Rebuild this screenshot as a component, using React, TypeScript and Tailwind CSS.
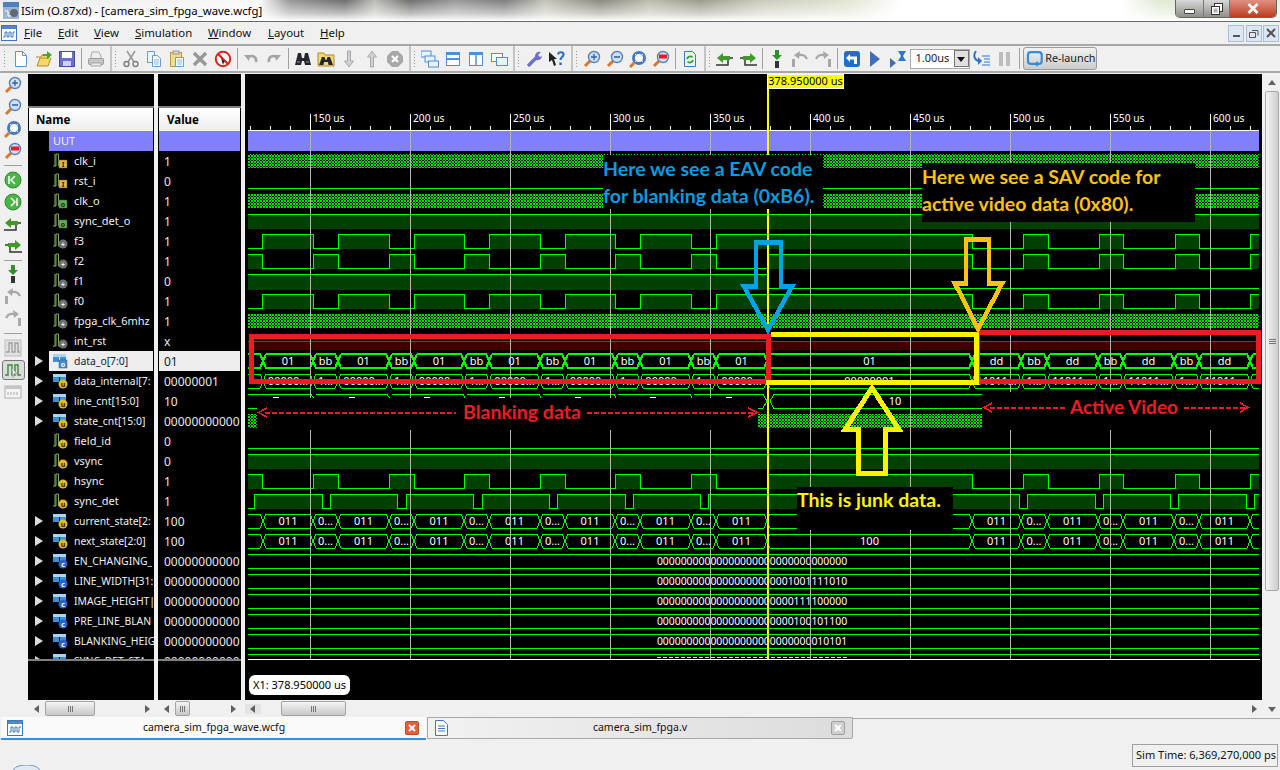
import type { ReactNode } from "react";

const G = "#00ff00";
const rows: [string, string, string][] = [
  ["UUT", "", "group"],
  ["clk_i", "1", "in"],
  ["rst_i", "0", "in"],
  ["clk_o", "1", "out"],
  ["sync_det_o", "1", "out"],
  ["f3", "1", "ball"],
  ["f2", "1", "ball"],
  ["f1", "0", "ball"],
  ["f0", "1", "ball"],
  ["fpga_clk_6mhz", "1", "ball"],
  ["int_rst", "x", "ball"],
  ["data_o[7:0]", "01", "busO"],
  ["data_internal[7:", "00000001", "busU"],
  ["line_cnt[15:0]", "10", "busU"],
  ["state_cnt[15:0]", "00000000000", "busU"],
  ["field_id", "0", "sig"],
  ["vsync", "0", "sig"],
  ["hsync", "1", "sig"],
  ["sync_det", "1", "sig"],
  ["current_state[2:", "100", "busU"],
  ["next_state[2:0]", "100", "busU"],
  ["EN_CHANGING_", "00000000000", "busC"],
  ["LINE_WIDTH[31:", "00000000000", "busC"],
  ["IMAGE_HEIGHT|", "00000000000", "busC"],
  ["PRE_LINE_BLAN", "00000000000", "busC"],
  ["BLANKING_HEIG", "00000000000", "busC"],
  ["SYNC_DET_STA", "00000000000", "busC"],
];

const Svg = ({ children, s = 18 }: { children: ReactNode; s?: number }) => (
  <svg width={s} height={s} viewBox="0 0 18 18" fill="none">
    {children}
  </svg>
);

const Lens = ({ children }: { children?: ReactNode }) => (
  <>
    <path d="M2 16l5-5" stroke="#d9782a" strokeWidth="3" />
    <circle cx="11" cy="7" r="5.5" fill="#cfe0f5" stroke="#5a7fb8" strokeWidth="1.4" />
    {children}
  </>
);

const WaveWin = () => (
  <svg width="16" height="16" viewBox="0 0 16 16" fill="none">
    <rect x=".5" y=".5" width="15" height="15" fill="#fff" stroke="#3f76c0" />
    <rect x="1" y="1" width="14" height="3" fill="#4f86cc" />
    <path d="M2 12h2V7h2v5h2V7h2v5h2V7h2" stroke="#3f76c0" />
  </svg>
);

const Icon = ({ n }: { n: string }) => {
  switch (n) {
    case "doc":
      return <Svg><path d="M3.5 1.5h7l4 4v11h-11z" fill="#fff" stroke="#5b93d3" /><path d="M10.5 1.5v4h4" stroke="#5b93d3" /></Svg>;
    case "open":
      return <Svg><path d="M1 7h5l1-2h7v3H5l-3 8h11l3-8" fill="#f5d76e" stroke="#b98a1c" /><path d="M8 4h4V1l5 4-5 4V6H8z" fill="#46a62e" /></Svg>;
    case "save":
      return <Svg><rect x="1.5" y="1.5" width="15" height="15" fill="#6c70c6" stroke="#484c9a" /><rect x="4" y="2" width="10" height="6" fill="#fff" /><rect x="5" y="11" width="8" height="5" fill="#cfd2ee" /></Svg>;
    case "print":
      return <Svg><path d="M5 2h7l2 4v3H4V6z" fill="#eee" stroke="#aaa" /><rect x="1.5" y="8.5" width="15" height="6" rx="1" fill="#c4c4c4" stroke="#999" /><rect x="4" y="13" width="10" height="3" fill="#e8e8e8" stroke="#aaa" /></Svg>;
    case "cut":
      return <Svg><path d="M5 1l7 11M13 1L6 12" stroke="#9a9a9a" strokeWidth="1.6" /><circle cx="4.5" cy="14" r="2.5" stroke="#808080" strokeWidth="1.4" /><circle cx="13.5" cy="14" r="2.5" stroke="#808080" strokeWidth="1.4" /></Svg>;
    case "copy":
      return <Svg><path d="M2.5 1.5h7v11h-7z" fill="#eef4fb" stroke="#6d9ad0" /><path d="M7.5 5.5h5l3 3v8h-8z" fill="#fff" stroke="#6d9ad0" /><path d="M9 10h5M9 12h5M9 14h5" stroke="#8fb3dd" /></Svg>;
    case "paste":
      return <Svg><rect x="2.5" y="2.5" width="11" height="14" fill="#f3dc8e" stroke="#b99a3a" /><rect x="5" y="1" width="6" height="3" fill="#d9d9d9" stroke="#999" /><path d="M7.5 7.5h8v9h-8z" fill="#fff" stroke="#6d9ad0" /><path d="M9 10h5M9 12h5M9 14h5" stroke="#8fb3dd" /></Svg>;
    case "del":
      return <Svg><path d="M3 3l12 12M15 3L3 15" stroke="#979797" strokeWidth="3.4" /></Svg>;
    case "noentry":
      return <Svg><circle cx="9" cy="9" r="7.2" fill="#fff" stroke="#d8261c" strokeWidth="2" /><path d="M6 4l7 9-3-1-1 3z" fill="#111" /><path d="M4 4l10 10" stroke="#d8261c" strokeWidth="2" /></Svg>;
    case "undo":
      return <Svg><path d="M5 8c3-3 10-3 9 4" stroke="#a4a4a4" strokeWidth="2.6" /><path d="M2 5l6 0-1 6z" fill="#a4a4a4" /></Svg>;
    case "redo":
      return <Svg><path d="M13 8c-3-3-10-3-9 4" stroke="#a4a4a4" strokeWidth="2.6" /><path d="M16 5l-6 0 1 6z" fill="#a4a4a4" /></Svg>;
    case "binoc":
      return <Svg><path d="M4 3h3l1 5h2l1-5h3l3 12h-6l-1-4H8l-1 4H1z" fill="#26262e" /><path d="M3 12h3M12 12h3" stroke="#8f99ad" /></Svg>;
    case "fbinoc":
      return <Svg><path d="M1 3h6l1 2h9v11H1z" fill="#f3d675" stroke="#b98a1c" /><path d="M5 7h2.5l1 3h1l1-3H13l3 8h-4.5L11 12H7l-.5 3H2z" fill="#26262e" /></Svg>;
    case "down":
      return <Svg><path d="M7.5 1h3v10h3L9 17l-4.500-6h3z" fill="#d0d0d0" stroke="#aaa" /></Svg>;
    case "up":
      return <Svg><path d="M7.5 17h3V7h3L9 1 4.500 7h3z" fill="#d0d0d0" stroke="#aaa" /></Svg>;
    case "stop":
      return <Svg><path d="M6 1h6l5 5v6l-5 5H6l-5-5V6z" fill="#a8a8a8" /><path d="M6 6l6 6M12 6l-6 6" stroke="#fff" strokeWidth="2.200" /></Svg>;
    case "cascade":
      return <Svg><rect x="0" y="1" width="10" height="6" fill="#eaf2fb" stroke="#4d90d8" /><rect x="4" y="6" width="10" height="6" fill="#eaf2fb" stroke="#4d90d8" /><rect x="7.500" y="11" width="10" height="6" fill="#eaf2fb" stroke="#4d90d8" /></Svg>;
    case "hsplit":
      return <Svg><rect x="2.500" y="2.500" width="13" height="13" fill="#fff" stroke="#4d90d8" /><rect x="3" y="3" width="12" height="2" fill="#4d90d8" /><path d="M2 9h14" stroke="#4d90d8" strokeWidth="2" /></Svg>;
    case "vsplit":
      return <Svg><rect x="2.500" y="2.500" width="13" height="13" fill="#fff" stroke="#4d90d8" /><rect x="3" y="3" width="12" height="2" fill="#4d90d8" /><path d="M9 3v13" stroke="#4d90d8" strokeWidth="1.500" /></Svg>;
    case "overlap":
      return <Svg><rect x="1.500" y="3.500" width="11" height="8" fill="#fff" stroke="#4d90d8" /><rect x="6.500" y="7.500" width="11" height="8" fill="#eaf2fb" stroke="#4d90d8" /></Svg>;
    case "wrench":
      return <Svg><path d="M3 16l8-8" stroke="#6c72c4" strokeWidth="3.400" /><path d="M10 7a4.500 4.500 0 0 1 6-5l-3 3 2 2 2-1a4.500 4.500 0 0 1-6 4z" fill="#6c72c4" /></Svg>;
    case "help":
      return <Svg><path d="M1 2l8 7H6l2 6-2 1-2-6-3 2z" fill="#222" /><path d="M10 4.500c.5-3 5.500-3 5.500 0 0 2.500-3 2.500-3 5.500" stroke="#2f6fc4" strokeWidth="2.200" /><rect x="11.300" y="12.500" width="2.500" height="2.500" fill="#2f6fc4" /></Svg>;
    case "zin":
      return <Svg><Lens><path d="M8 7h6M11 4v6" stroke="#3b62a8" strokeWidth="1.400" /></Lens></Svg>;
    case "zout":
      return <Svg><Lens><path d="M8 7h6" stroke="#3b62a8" strokeWidth="1.600" /></Lens></Svg>;
    case "zfit":
      return <Svg><path d="M1 17l4-4" stroke="#d9782a" strokeWidth="3" /><circle cx="10" cy="8" r="5.500" fill="#fff" stroke="#4a78bd" strokeWidth="3" /><path d="M6 4l3 3M14 4l-3 3M6 12l3-3M14 12l-3-3" stroke="#e8eef8" /></Svg>;
    case "zred":
      return <Svg><Lens><rect x="7" y="4.500" width="8" height="4" fill="#ee1c1c" /></Lens></Svg>;
    case "refresh":
      return <Svg><path d="M3.500 1.500h8l3 3v12h-11z" fill="#eaf3fc" stroke="#3f7cc6" /><path d="M6 9a3.200 3.200 0 0 1 5.500-1.500M12 10a3.200 3.200 0 0 1-5.500 1.500" stroke="#2fa52f" strokeWidth="1.700" /></Svg>;
    case "stepL":
      return <Svg><path d="M0 15h12V8h5" stroke="#333" strokeWidth="1.500" /><path d="M1 8l6-5v3h7v4H7v3z" fill="#3f9a2a" /></Svg>;
    case "stepR":
      return <Svg><path d="M18 15H6V8H1" stroke="#333" strokeWidth="1.500" /><path d="M17 8l-6-5v3H4v4h7v3z" fill="#3f9a2a" /></Svg>;
    case "stepD":
      return <Svg><path d="M7 0h4v5h3l-5 5-5-5h3z" fill="#2f8f2a" /><rect x="7" y="11" width="4" height="7" fill="#333" /></Svg>;
    case "arcL":
      return <Svg><rect x="1" y="9" width="3" height="8" fill="#a8a8a8" /><path d="M6 6c4-2 8-1 10 3" stroke="#a8a8a8" strokeWidth="2.400" /><path d="M9 1L3 5l5 4z" fill="#a8a8a8" /></Svg>;
    case "arcR":
      return <Svg><rect x="14" y="9" width="3" height="8" fill="#a8a8a8" /><path d="M12 6C8 4 4 5 2 9" stroke="#a8a8a8" strokeWidth="2.400" /><path d="M9 1l6 4-5 4z" fill="#a8a8a8" /></Svg>;
    case "back":
      return <Svg><rect x="1" y="1" width="16" height="16" rx="3" fill="#1f6fc6" /><path d="M7 4L3 8l4 4V9.500h4V14h3V6.500H7z" fill="#fff" /></Svg>;
    case "play":
      return <Svg><path d="M4 1l10 8-10 8z" fill="#3f6fb8" /></Svg>;
    case "hour":
      return <Svg><path d="M1 8l6 5-6 5z" fill="#3f6fb8" /><path d="M9 1h8l-3 5 3 5H9l3-5z" fill="#2f77c8" /></Svg>;
    case "steplist":
      return <Svg><path d="M3 1C0 5 1 10 6 11" stroke="#2f77c8" strokeWidth="2" /><path d="M5 7l4 4-4 4z" fill="#2f77c8" /><path d="M9 6h8M11 9h6M11 12h6M9 15h8" stroke="#2f77c8" /></Svg>;
    case "pause":
      return <Svg><rect x="3" y="2" width="4" height="14" fill="#bdbdbd" /><rect x="10" y="2" width="4" height="14" fill="#bdbdbd" /></Svg>;
    case "relaunch":
      return <Svg><rect x="2" y="2" width="14" height="12" rx="3" stroke="#2f8fd8" strokeWidth="2.200" /><path d="M12 11l-4 3 4 3z" fill="#2f8fd8" /></Svg>;
    case "goL":
      return <Svg><circle cx="9" cy="9" r="8" fill="#4cb548" stroke="#2f8a2c" /><path d="M11 5L7 9l4 4M5 5v8" stroke="#fff" strokeWidth="1.500" /></Svg>;
    case "goR":
      return <Svg><circle cx="9" cy="9" r="8" fill="#4cb548" stroke="#2f8a2c" /><path d="M7 5l4 4-4 4M13 5v8" stroke="#fff" strokeWidth="1.500" /></Svg>;
    case "gwave":
      return <Svg><rect x="1" y="1" width="16" height="16" fill="#e2e2e2" stroke="#bbb" /><path d="M2 13h3V4h3v9h3V4h3v9h2" stroke="#a0a0a0" strokeWidth="1.400" /></Svg>;
    case "gwave2":
      return <Svg><path d="M1 14h3V4h4v10h3V4h3v10h3" stroke="#3f8a3c" strokeWidth="1.400" /><path d="M8 7l5 6-3-.5-1 4z" fill="#fff" stroke="#999" strokeWidth=".6" /></Svg>;
    case "ruler":
      return <Svg><rect x="1" y="3" width="16" height="12" fill="#f4f4f4" stroke="#b0b0b0" /><rect x="1" y="3" width="16" height="3" fill="#c4c4c4" /><path d="M4 9v3M7 9v3M10 9v3M13 9v3" stroke="#aaa" /></Svg>;
    default:
      return null;
  }
};

const Btn = ({ n }: { n: string }) => (
  <div className="flex h-[25px] w-[23px] shrink-0 items-center justify-center">
    <Icon n={n} />
  </div>
);

const Sep = () => (
  <div className="flex h-[25px] w-[6px] shrink-0 justify-center py-[2px]">
    <div className="w-px bg-[#a0a0a0]" />
  </div>
);

const Grip = () => (
  <div className="flex h-[25px] shrink-0 flex-col justify-center gap-[2px]">
    {[0, 1, 2, 3, 4, 5].map((i) => (
      <div key={i} className="h-px w-px bg-[#9a9a9a]" />
    ))}
  </div>
);

const GroupGap = () => (
  <div className="flex h-[25px] w-[12px] shrink-0 gap-[3px] pl-[2px]">
    <div className="h-full w-[2px] bg-[#c4c4c4]" />
    <Grip />
  </div>
);

const Tri = ({ d, c = "#606060" }: { d: "l" | "r" | "u" | "d"; c?: string }) => {
  const p = { l: "M7 1v8L2 5z", r: "M3 1v8l5-4z", u: "M1 7h8L5 2z", d: "M1 3h8L5 8z" }[d];
  return (
    <svg width="10" height="10" viewBox="0 0 10 10">
      <path d={p} fill={c} />
    </svg>
  );
};

const Thumb = ({ cls }: { cls: string }) => (
  <div className={`flex h-[15px] items-center justify-center gap-px rounded-[2px] border border-[#a4a4a4] bg-gradient-to-b from-[#f4f4f4] to-[#c8c8c8] ${cls}`}>
    <div className="h-[6px] w-px bg-[#777]" />
    <div className="h-[6px] w-px bg-[#777]" />
    <div className="h-[6px] w-px bg-[#777]" />
  </div>
);

const RowGlyph = ({ k }: { k: string }) => {
  if (k === "group") return null;
  const bus = k.startsWith("bus");
  const bg = k === "in" ? "#e6b93c" : k === "out" ? "#5fb04a" : k === "ball" ? "#6e6e6e" : k === "busO" ? "#3f8fd8" : k === "busC" ? "#2f5fc8" : "#e8b820";
  const ch = k === "in" ? "I" : k === "out" ? "o" : k === "ball" ? "+" : k === "busC" ? "c" : k === "busO" ? "o" : "u";
  const square = k === "in" || k === "out" || k === "busO";
  return (
    <svg width="22" height="20" viewBox="0 0 22 20" fill="none">
      {bus ? (
        <>
          <path d="M4 3h6v8H4zM11 3h6v8h-6z" fill="#3f8fd8" />
          <path d="M4 3h13v3H4z" fill="#a8d4f5" />
        </>
      ) : (
        <path d="M4 15h3V3h2.500M6 15V3M9.500 3v12H12" stroke="#7fa860" />
      )}
      {square ? (
        <rect x="10" y="9" width="8" height="8" fill={bg} stroke="#555" strokeWidth=".5" />
      ) : (
        <circle cx="14" cy="13" r="4.500" fill={bg} />
      )}
      <text x="14" y="15.500" textAnchor="middle" fontSize="7" fontWeight="700" fill={k === "busO" || k === "busC" || k === "ball" ? "#fff" : "#222"}>
        {ch}
      </text>
    </svg>
  );
};

// one signal list column: black top, header, rows, black bottom, scroll bar under it
const NameColumn = () => (
  <div className="flex w-[127px] shrink-0 flex-col">
    <div className="mr-px flex h-[626px] flex-col bg-black">
      <div className="h-[32px] shrink-0" />
      <div className="h-[2px] shrink-0 bg-[#808080]" />
      <div className="mx-px flex h-[23px] shrink-0 items-center bg-gradient-to-b from-white to-[#eeeeee] pl-[7px] text-[11.5px] font-bold text-black">Name</div>
      <div className="h-[528px] shrink-0 overflow-hidden">
        {rows.map(([name, , kind]) => (
          <div key={name} className="flex h-5 items-center">
            <div className="flex w-[21px] shrink-0 justify-center">
              {kind.startsWith("bus") && (
                <svg width="10" height="12" viewBox="0 0 10 12">
                  <path d="M1 1v10l8-5z" fill="#dcdcdc" />
                </svg>
              )}
            </div>
            <div className={`flex h-5 min-w-0 flex-1 items-center ${name === "UUT" ? "mr-px bg-[#8080ff]" : name === "data_o[7:0]" ? "mr-px bg-[#eeeeee]" : ""}`}>
              <div className={`flex h-5 shrink-0 items-center ${name === "UUT" ? "w-[4px]" : "w-[25px]"}`}>
                <RowGlyph k={kind} />
              </div>
              <span className={`overflow-hidden whitespace-nowrap pt-px ${kind.startsWith("bus") ? "text-[10.4px]" : "text-[11px]"} ${name === "data_o[7:0]" ? "text-[#102040]" : "text-[#f0f0f0]"}`}>{name}</span>
            </div>
          </div>
        ))}
      </div>
      <div className="h-[2px] shrink-0 bg-[#808080]" />
    </div>
    <div className="flex h-[17px] items-center">
      <div className="flex w-[17px] justify-center"><Tri d="l" /></div>
      <Thumb cls="w-[50px]" />
      <div className="flex-1" />
      <div className="flex w-[17px] justify-center"><Tri d="r" /></div>
    </div>
  </div>
);

const ValueColumn = () => (
  <div className="ml-[3px] flex w-[83px] shrink-0 flex-col">
    <div className="flex h-[626px] flex-col bg-black">
      <div className="h-[32px] shrink-0" />
      <div className="h-[2px] shrink-0 bg-[#808080]" />
      <div className="mx-px flex h-[23px] shrink-0 items-center bg-gradient-to-b from-white to-[#eeeeee] pl-[8px] text-[11.5px] font-bold text-black">Value</div>
      <div className="h-[528px] shrink-0 overflow-hidden">
        {rows.map(([name, value]) => (
          <div key={name} className={`mx-px flex h-5 items-center overflow-hidden whitespace-nowrap pl-[5px] pt-px text-[12px] ${name === "UUT" ? "bg-[#8080ff]" : name === "data_o[7:0]" ? "bg-[#eeeeee] text-[#102040]" : "text-[#e8e8e8]"}`}>
            {value}
          </div>
        ))}
      </div>
      <div className="h-[2px] shrink-0 bg-[#808080]" />
    </div>
    <div className="flex h-[17px] items-center">
      <div className="flex w-[17px] justify-center"><Tri d="l" /></div>
      <Thumb cls="w-[15px]" />
      <div className="flex-1" />
      <div className="flex w-[17px] justify-center"><Tri d="r" /></div>
    </div>
  </div>
);

// bus boundaries shared by most of the multi bit rows
const B = [263, 313, 338, 389, 414, 464, 489, 540, 565, 615, 640, 691, 716, 767, 972, 1021, 1047, 1098, 1123, 1174, 1199, 1250];
const E = [262, 313, 338, 389, 414, 464, 489, 540, 565, 615, 640, 691, 716];
const POST = [972, 1023, 1048, 1099, 1123, 1175, 1199, 1250];

const Bus = ({ c, labels, sw = 1, alt }: { c: number; labels: string[]; sw?: number; alt: string[] }) => {
  const t = c - 7;
  const b = c + 7;
  const all = [248, ...B, 1259];
  return (
    <g>
      {all.slice(0, -1).map((x, i) => {
        const e = all[i + 1];
        const last = i === all.length - 2;
        const l = i === 0 ? x : x + 3;
        const r = last ? e : e - 3;
        const d = `M${l} ${t}H${r}${last ? `M${r} ${b}` : `L${e} ${c}L${r} ${b}`}H${l}${i === 0 ? "" : `L${x} ${c}L${l} ${t}`}`;
        let txt = "";
        if (i > 0 && !last) {
          if (i === 14) txt = alt[0];
          else if (i > 14) txt = i % 2 === 1 ? alt[1] : labels[1];
          else txt = i % 2 === 1 ? labels[0] : labels[1];
        }
        return (
          <g key={x}>
            <path d={d} stroke={G} strokeWidth={sw} />
            {txt && (
              <text x={(x + e) / 2} y={c + 4} textAnchor="middle" fontSize="11" fill="#fff">
                {txt}
              </text>
            )}
          </g>
        );
      })}
    </g>
  );
};

const Square = ({ c, edges, high }: { c: number; edges: number[]; high: boolean }) => {
  const t = c - 7;
  const b = c + 7;
  const xs = [248, ...edges, 1259];
  let d = `M248 ${high ? t : b}`;
  const fills: ReactNode[] = [];
  let h = high;
  xs.slice(1).forEach((x, i) => {
    if (h) fills.push(<rect key={x} x={xs[i]} y={t} width={x - xs[i]} height={15} fill="#004000" />);
    d += `H${x}`;
    if (i < xs.length - 2) d += `V${h ? b : t}`;
    h = !h;
  });
  return (
    <g>
      {fills}
      <path d={d} stroke={G} />
    </g>
  );
};

const Dither = ({ y, x = 248, w = 1011 }: { y: number; x?: number; w?: number }) => <rect x={x} y={y} width={w} height={14} fill="url(#dither)" />;

const Flat = ({ c, text }: { c: number; text: string }) => (
  <g>
    <path d={`M248 ${c - 7}H1259M248 ${c + 7}H1259`} stroke={G} />
    <text x="752" y={c + 4} textAnchor="middle" fontSize="10.400" fill="#fff">
      {text}
    </text>
  </g>
);

const WaveCanvas = () => {
  const ticks: number[] = [];
  for (let x = 250; x < 1259; x += 20) ticks.push(x);
  const majors = [310, 410, 510, 610, 710, 810, 910, 1010, 1110, 1210];
  return (
    <svg className="block" width="1017" height="625" viewBox="245 74 1017 625" fill="none" shapeRendering="crispEdges">
      <defs>
        <pattern id="dither" width="3" height="3" patternUnits="userSpaceOnUse">
          <rect x="0" y="0" width="1" height="1" fill="#00e000" />
          <rect x="2" y="0" width="1" height="1" fill="#00e000" />
          <rect x="1" y="1" width="1" height="1" fill="#00e000" />
          <rect x="0" y="2" width="1" height="1" fill="#00e000" />
          <rect x="2" y="2" width="1" height="1" fill="#00e000" />
        </pattern>
      </defs>
      {/* ruler */}
      <path d="M248 130.500H1259" stroke="#fff" />
      {ticks.map((x) => (
        <path key={x} d={`M${x}.5 126V130`} stroke="#fff" />
      ))}
      {majors.map((x, i) => (
        <g key={x}>
          <path d={`M${x}.5 114V130`} stroke="#fff" />
          <text x={x + 3} y="122" fontSize="10.200" fill="#fff">
            {150 + i * 50} us
          </text>
        </g>
      ))}
      <rect x="248" y="131" width="1011" height="20" fill="#8080ff" />

      {/* signals */}
      <Dither y={154} />
      <path d="M248 188.500H1259" stroke={G} />
      <Dither y={194} />
      <Square c={221} edges={[]} high />
      <Square c={241} edges={[...E, ...POST]} high={false} />
      <Square c={261} edges={[...E, 767, ...POST]} high />
      <rect x="248" y="275" width="520" height="15" fill="#004000" />
      <path d="M248 274.500H768V288.500H1259" stroke={G} />
      <Square c={301} edges={[...E, ...POST]} high={false} />
      <Dither y={314} />
      <rect x="248" y="342" width="1011" height="8" fill="#400000" />
      <path d="M248 341.500H1259" stroke="#ff0000" />
      <Bus c={361} labels={["01", "bb"]} sw={2} alt={["01", "dd"]} />
      <Bus c={381} labels={["00000...", "1..."]} alt={["00000001", "11011..."]} />
      <path d="M248 394.500H311L316 401L311 408M316 394.500H387L392 401M392 394.500H463L467 401M467 394.500H539L543 401M543 394.500H614L618 401M618 394.500H690L694 401M694 394.500H763L767 401L763 408H248M770 401L774 394.500H982M770 401L774 408.500H982" stroke={G} />
      <text x="895" y="405" textAnchor="middle" fontSize="11" fill="#fff">10</text>
      {[276, 352, 427, 502, 578, 653, 729].map((x) => (
        <rect key={x} x={x - 3} y="397" width="6" height="1" fill="#fff" />
      ))}
      <Dither y={414} />
      <path d="M248 448.500H1259" stroke={G} />
      <Square c={461} edges={[]} high />
      <Square c={481} edges={[...E, 767, ...POST]} high />
      <Square c={501} edges={[254, 322, 330, 397, 406, 473, 482, 549, 557, 625, 633, 700, 708, 1019, 1027, 1095, 1103, 1170, 1178, 1246, 1254]} high={false} />
      <Bus c={521} labels={["011", "0..."]} alt={["100", "011"]} />
      <Bus c={541} labels={["011", "0..."]} alt={["100", "011"]} />
      <Flat c={561} text="00000000000000000000000000000000" />
      <Flat c={581} text="00000000000000000000001001111010" />
      <Flat c={601} text="00000000000000000000000111100000" />
      <Flat c={621} text="00000000000000000000000100101100" />
      <Flat c={641} text="00000000000000000000000000010101" />
      <path d="M248 654.500H1259" stroke={G} />
      {/* tops of the next row's value, cut by the end of the list */}
      <path d="M657 657.500H848" stroke="#d8d8d8" strokeDasharray="4 2" />

      {/* cursors over the traces */}
      {majors.map((x) => (
        <path key={x} d={`M${x}.5 131V659`} stroke="#b4b4b4" />
      ))}
      <rect x="767" y="89" width="2" height="570" fill="#ffff00" />

      {/* area hidden under the annotation labels */}
      <rect x="257" y="398" width="501" height="32" fill="#000" />
      <rect x="982" y="392" width="280" height="38" fill="#000" />
      <path d="M248 659.500H1260" stroke="#fff" />
      <path d="M245 699H1262" stroke="#e8e8e8" />

      {/* red, yellow frames and arrows drawn on the screenshot */}
      <path d="M766 336.500H251.500V381.500H766" stroke="#ed1c24" strokeWidth="5" />
      <path d="M979 332.500H1258.500V381.500H979" stroke="#ed1c24" strokeWidth="5" />
      <rect x="975" y="332" width="5" height="52" fill="#ed1c24" />
      <rect x="766" y="334" width="5" height="50" fill="#ed1c24" />
      <path d="M771 334.500H976.500V382.500H771" stroke="#fff200" strokeWidth="5" />
      <rect x="766" y="380" width="5" height="5" fill="#fff200" />
      <path d="M756 242.500H781V286.500H792L768 330L744 286.500H756Z" stroke="#00a2e8" strokeWidth="4.500" strokeLinejoin="miter" />
      <path d="M966 239.500H989V283.500H1002L978 329L955 283.500H966Z" stroke="#ffc20e" strokeWidth="4.500" />
      <path d="M872 388L899 429.500H885.500V473H858.500V429.500H845Z" stroke="#fff200" strokeWidth="5" />

      {/* range markers */}
      <path d="M267 408L258.500 412.500L267 417" stroke="#ed1c24" strokeWidth="1.600" />
      <path d="M265 412.500H456M587 412.500H755" stroke="#ed1c24" strokeWidth="2" strokeDasharray="5 2" />
      <path d="M748 408L757 412.500L748 417" stroke="#ed1c24" strokeWidth="1.600" />
      <path d="M992 403L984 407.500L992 412" stroke="#ed1c24" strokeWidth="1.600" />
      <path d="M990 407.500H1065M1184 407.500H1246" stroke="#ed1c24" strokeWidth="2" strokeDasharray="5 2" />
      <path d="M1240 403L1248 407.500L1240 412" stroke="#ed1c24" strokeWidth="1.600" />
    </svg>
  );
};

const WavePanel = () => (
  <div className="flex w-[1017px] shrink-0 flex-col">
    <div className="relative h-[626px] overflow-hidden bg-black">
      <WaveCanvas />
      <div className="absolute left-[522px] top-0 flex h-[15px] w-[77px] items-center justify-center whitespace-nowrap border border-white bg-[#ffff00] text-[11px] text-black">378.950000 us</div>
      <div className="absolute left-[358px] top-[81px] h-[54px] w-[220px] bg-black font-['Lato',sans-serif] text-[19.500px] font-bold leading-[27px] whitespace-nowrap text-[#0a9be0]">
        <div>Here we see a EAV code</div>
        <div>for blanking data (0xB6).</div>
      </div>
      <div className="absolute left-[677px] top-[89px] h-[59px] w-[273px] bg-black font-['Lato',sans-serif] text-[19.500px] font-bold leading-[27px] whitespace-nowrap text-[#ffc20e]">
        <div>Here we see a SAV code for</div>
        <div>active video data (0x80).</div>
      </div>
      <div className="absolute left-[552px] top-[413px] h-[43px] w-[156px] bg-black font-['Lato',sans-serif] text-[19.500px] font-bold leading-[25px] whitespace-nowrap text-[#fff200]">This is junk data.</div>
      <div className="absolute left-[218px] top-[326px] font-['Lato',sans-serif] text-[19.500px] font-bold leading-[24px] whitespace-nowrap text-[#ed1c24]">Blanking data</div>
      <div className="absolute left-[825px] top-[321px] font-['Lato',sans-serif] text-[19px] font-bold leading-[24px] whitespace-nowrap text-[#ed1c24]">Active Video</div>
      <div className="absolute left-[4px] top-[601px] flex h-[20px] w-[101px] items-center whitespace-nowrap rounded-[6px] bg-white pl-[4px] text-[11px] text-black">X1: 378.950000 us</div>
    </div>
    <div className="flex h-[17px] items-center">
      <div className="flex w-[16px] justify-center bg-[#e4e4e4]"><Tri d="l" /></div>
      <div className="w-[20px]" />
      <Thumb cls="w-[65px]" />
      <div className="flex-1" />
      <div className="flex w-[17px] justify-center"><Tri d="r" /></div>
    </div>
  </div>
);

const TitleBar = () => (
  <div className="relative flex h-[22px] shrink-0 items-center border-b border-[#6a6a6a] bg-[linear-gradient(to_bottom,rgba(255,255,255,0.1)_0%,rgba(255,255,255,0.6)_65%,#ffffff_100%),linear-gradient(to_right,#e8e8e8_0,#f8f8f8_260px,#8c8c8c_290px,#5c5c5c_345px,#b4b4ac_375px,#5e5e5e_410px,#8e8e8e_455px,#6e6e6e_505px,#bcbcb0_545px,#7c7c70_600px,#b4b4a4_650px,#90907f_700px,#c4c4b4_760px,#dfe3cf_850px,#ffffff_900px,#ffffff_1120px,#dbe7cf_1160px,#e8e8e0_1280px)] text-[11.350px] text-black">
    <div className="flex w-[21px] shrink-0 justify-center">
      <svg width="16" height="17" viewBox="0 0 16 17">
        <rect width="16" height="5" fill="#4f7fbf" />
        <rect y="5" width="16" height="12" fill="#9db4cf" />
        <circle cx="11" cy="11" r="4" fill="#606870" />
        <path d="M2 9h3v5h3" stroke="#fff" fill="none" />
      </svg>
    </div>
    <span>ISim (O.87xd) - [camera_sim_fpga_wave.wcfg]</span>
    <div className="absolute right-[3px] top-0 flex h-[18px] w-[102px] overflow-hidden rounded-b-[5px] border border-t-0 border-[#666]">
      <div className="flex w-[28px] items-center justify-center border-r border-[#777] bg-gradient-to-b from-[#d8d8d8] to-[#8f9088]">
        <div className="mt-[5px] h-[5px] w-[11px] rounded-[1px] border border-[#444] bg-white" />
      </div>
      <div className="flex w-[26px] items-center justify-center border-r border-[#777] bg-gradient-to-b from-[#d8d8d8] to-[#8f9088]">
        <svg width="12" height="12" viewBox="0 0 12 12" fill="none">
          <rect x="3.500" y=".5" width="8" height="8" fill="#fff" stroke="#333" />
          <rect x=".5" y="3.500" width="8" height="8" fill="#fff" stroke="#333" />
          <rect x="2.500" y="5.500" width="4" height="4" fill="#b0b0b0" />
        </svg>
      </div>
      <div className="flex flex-1 items-center justify-center bg-gradient-to-b from-[#e09080] to-[#bb3a1c]">
        <svg width="12" height="11" viewBox="0 0 12 11">
          <path d="M1.500 1l9 9M10.500 1l-9 9" stroke="#fff" strokeWidth="2.800" />
        </svg>
      </div>
    </div>
  </div>
);

const menus: [string, string, string][] = [
  ["F", "ile", "w-[34px]"],
  ["E", "dit", "w-[36px]"],
  ["V", "iew", "w-[41px]"],
  ["S", "imulation", "w-[73px]"],
  ["W", "indow", "w-[60px]"],
  ["L", "ayout", "w-[52px]"],
  ["H", "elp", "w-[40px]"],
];

const SubBtn = ({ children }: { children: ReactNode }) => (
  <div className="flex h-[17px] w-[16px] items-center justify-center border border-[#a8bfd6] bg-[#dce7f3]">{children}</div>
);

const MenuBar = () => (
  <div className="flex h-[22px] shrink-0 items-center bg-[#f0f0f0] text-[11.400px] text-[#111]">
    <div className="flex w-[24px] shrink-0 pl-px"><WaveWin /></div>
    {menus.map(([u, rest, w]) => (
      <div key={u} className={w}>
        <u>{u}</u>
        {rest}
      </div>
    ))}
    <div className="ml-auto mr-px flex gap-[1.500px]">
      <SubBtn>
        <div className="mt-[6px] h-[2px] w-[7px] bg-[#555]" />
      </SubBtn>
      <SubBtn>
        <svg width="10" height="10" viewBox="0 0 10 10" fill="none">
          <path d="M3 2.500h6v5M.5 4.500h6v5h-6z" stroke="#555" />
        </svg>
      </SubBtn>
      <SubBtn>
        <svg width="10" height="10" viewBox="0 0 10 10">
          <path d="M1 1l8 8M9 1l-8 8" stroke="#555" strokeWidth="2" />
        </svg>
      </SubBtn>
    </div>
  </div>
);

const ToolBar = () => (
  <div className="flex h-[29px] shrink-0 items-center border-y-[2px] border-[#a8a8a8] bg-[#f0f0f0]">
    <div className="flex w-[9.500px] shrink-0 justify-center"><Grip /></div>
    <Btn n="doc" /><Btn n="open" /><Btn n="save" /><Sep /><Btn n="print" />
    <GroupGap />
    <Btn n="cut" /><Btn n="copy" /><Btn n="paste" /><Btn n="del" /><Btn n="noentry" /><div className="flex h-[25px] w-[5px] shrink-0 justify-center py-[2px]"><div className="w-px bg-[#a0a0a0]" /></div>
    <Btn n="undo" /><Btn n="redo" /><Sep />
    <Btn n="binoc" /><Btn n="fbinoc" /><Btn n="down" /><Btn n="up" /><Btn n="stop" />
    <GroupGap />
    <Btn n="cascade" /><Btn n="hsplit" /><Btn n="vsplit" /><Btn n="overlap" />
    <GroupGap />
    <Btn n="wrench" /><Btn n="help" />
    <GroupGap />
    <Btn n="zin" /><Btn n="zout" /><Btn n="zfit" /><Btn n="zred" /><Sep /><Btn n="refresh" />
    <GroupGap />
    <Btn n="stepL" /><Btn n="stepR" /><Sep />
    <Btn n="stepD" /><Btn n="arcL" /><Btn n="arcR" /><Sep />
    <Btn n="back" /><Btn n="play" /><Btn n="hour" />
    <div className="flex h-[20px] w-[60px] shrink-0 items-center border border-[#aaa] bg-white pl-[5px] text-[11px] text-[#222]">
      <span className="w-[38px]">1.00us</span>
      <div className="flex h-[17px] w-[15px] items-center justify-center border border-[#777] bg-[#e0e0e0]"><Tri d="d" c="#111" /></div>
    </div>
    <div className="w-px shrink-0" />
    <Btn n="steplist" /><Btn n="pause" /><Sep />
    <div className="flex h-[23px] w-[74px] shrink-0 items-center gap-[2px] whitespace-nowrap rounded-[3px] border border-[#9a9a9a] bg-gradient-to-b from-[#f2f2f2] to-[#cccccc] pl-[2px] text-[10.800px] text-[#222]">
      <Icon n="relaunch" />
      <span>Re-launch</span>
    </div>
  </div>
);

const SideBtn = ({ n, active }: { n: string; active?: boolean }) => (
  <div className="flex h-[22px] items-center justify-center">
    <div className={active ? "flex h-[20px] w-[23px] items-center justify-center rounded-[3px] border border-[#777] bg-[#dcdcdc]" : "flex items-center justify-center"}>
      <Icon n={n} />
    </div>
  </div>
);

const SideSep = ({ h }: { h: string }) => (
  <div className={`flex items-center px-[4px] ${h}`}>
    <div className="h-px w-full bg-[#a0a0a0]" />
  </div>
);

const SideBar = () => (
  <div className="flex w-[28px] shrink-0 flex-col pr-[2px]">
    <SideBtn n="zin" /><SideBtn n="zout" /><SideBtn n="zfit" /><SideBtn n="zred" />
    <SideSep h="h-[7px]" />
    <SideBtn n="goL" /><SideBtn n="goR" /><SideBtn n="stepL" /><SideBtn n="stepR" />
    <SideSep h="h-[6px]" />
    <SideBtn n="stepD" /><SideBtn n="arcL" /><SideBtn n="arcR" />
    <SideSep h="h-[8px]" />
    <SideBtn n="gwave" /><SideBtn n="gwave2" active /><SideBtn n="ruler" />
  </div>
);

const VScroll = () => (
  <div className="ml-[2px] flex w-[16px] shrink-0 flex-col items-center">
    <div className="flex h-[17px] items-center"><Tri d="u" /></div>
    <div className="flex h-[500px] w-[14px] flex-col items-center justify-center gap-px rounded-[2px] border border-[#aaa] bg-gradient-to-r from-[#f4f4f4] to-[#cdcdcd]">
      <div className="h-px w-[7px] bg-[#777]" />
      <div className="h-px w-[7px] bg-[#777]" />
      <div className="h-px w-[7px] bg-[#777]" />
    </div>
    <div className="flex-1" />
    <div className="flex h-[17px] items-center"><Tri d="d" /></div>
  </div>
);

const Tabs = () => (
  <div className="flex h-[24px] shrink-0 items-start text-[10.500px] text-[#111]">
    <div className="ml-px flex h-[23px] w-[425px] items-center border-b-[2px] border-b-[#3b8ede] bg-[#fafafa] pl-[6px] pr-[7px]">
      <WaveWin />
      <span className="flex-1 text-center">camera_sim_fpga_wave.wcfg</span>
      <svg width="14" height="14" viewBox="0 0 14 14">
        <rect x=".5" y=".5" width="13" height="13" rx="1.500" fill="#e0603c" stroke="#c04a2c" />
        <path d="M4 4l6 6M10 4l-6 6" stroke="#fff" strokeWidth="2" />
      </svg>
    </div>
    <div className="ml-px flex h-[22px] w-[426px] items-center rounded-br-[2px] border border-[#a8a8a8] bg-gradient-to-r from-[#f2f2f2] to-[#dcdcdc] pl-[6px] pr-[7px]">
      <svg width="15" height="16" viewBox="0 0 15 16" fill="none">
        <path d="M1.500.5h8l4 4v11h-12z" fill="#fff" stroke="#3f76c0" />
        <path d="M4 6h7M4 8.500h7M4 11h7" stroke="#3f76c0" />
      </svg>
      <span className="flex-1 text-center">camera_sim_fpga.v</span>
      <svg width="14" height="14" viewBox="0 0 14 14">
        <rect x=".5" y=".5" width="13" height="13" rx="1.500" fill="#cfcfcf" stroke="#a0a0a0" />
        <path d="M4 4l6 6M10 4l-6 6" stroke="#fff" strokeWidth="2" />
      </svg>
    </div>
    <div className="mt-px h-px flex-1 bg-[#a8a8a8]" />
  </div>
);

const StatusBar = () => (
  <div className="flex flex-1 items-end justify-between pb-[3px] pr-[2px]">
    <svg className="ml-[13px] -mb-[3px]" width="27" height="5" viewBox="0 0 27 5" fill="none">
      <path d="M0 5C3 1 8 0 13.500 0S24 1 27 5" fill="#dfe9f3" stroke="#6c92b8" />
    </svg>
    <div className="flex h-[23px] w-[146px] items-center whitespace-nowrap border border-[#a0a0a0] pl-[3px] text-[11px] text-[#111]">Sim Time: 6,369,270,000 ps</div>
  </div>
);

export default function App() {
  return (
    <div className="flex h-[770px] w-[1280px] flex-col overflow-hidden bg-[#f0f0f0] font-['Noto_Sans',sans-serif]">
      <TitleBar />
      <MenuBar />
      <ToolBar />
      <div className="flex h-[644px] shrink-0 pt-px">
        <SideBar />
        <NameColumn />
        <ValueColumn />
        <div className="w-[4px] shrink-0" />
        <WavePanel />
        <VScroll />
      </div>
      <Tabs />
      <StatusBar />
    </div>
  );
}
